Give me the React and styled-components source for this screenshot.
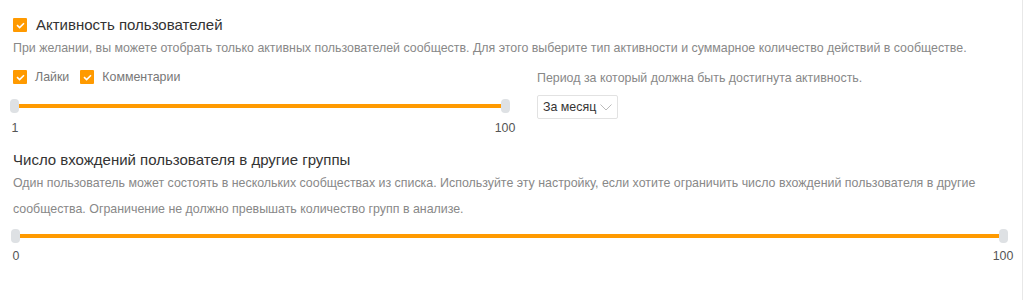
import styled, { createGlobalStyle } from "styled-components";

const GlobalStyle = createGlobalStyle`
body {
  margin: 0;
  background: #fff;
  font-family: "Liberation Sans", Arial, sans-serif;
}
`;

const Page = styled.div`
width: 1023px;
height: 300px;
box-sizing: border-box;
padding: 16px 0 0 13px;
border-right: 1px solid #e8e8e8;
`;

const Header = styled.label`
display: flex;
align-items: center;
gap: 9px;
height: 18px;
`;

const Box = styled.span`
width: 14px;
height: 14px;
background: #ff9a00;
border-radius: 1px;
display: flex;
align-items: center;
justify-content: center;
flex-shrink: 0;
`;

const Title = styled.span`
font-size: 15px;
color: #333;
line-height: ${(p) => (p.small ? "20px" : "18px")};
`;

const Desc = styled.p`
margin: ${(p) => p.margin || "0"};
font-size: 12.4px;
color: #888;
line-height: ${(p) => p.lh || "18px"};
`;

const Columns = styled.div`
display: flex;
margin-top: 11px;
`;

const Left = styled.div`
width: 497px;
`;

const Right = styled.div`
margin-left: 27px;
padding-top: 1px;
`;

const CheckRow = styled.div`
display: flex;
align-items: center;
height: 18px;
`;

const CheckItem = styled.label`
display: flex;
align-items: center;
gap: 8px;
margin-right: 11px;
font-size: 12.4px;
color: #777;
`;

const SliderWrap = styled.div`
width: ${(p) => p.width}px;
margin: ${(p) => p.margin};
`;

const Rail = styled.div`
position: relative;
height: 14px;
`;

const Track = styled.div`
position: absolute;
left: 4px;
right: 4px;
top: 5px;
height: 4px;
background: #ff9a00;
`;

const Thumb = styled.div`
position: absolute;
top: 0;
${(p) => (p.end ? "right: 0;" : "left: 0;")}
width: 9px;
height: 14px;
border-radius: 4px;
background: #dee1e4;
`;

const Labels = styled.div`
display: flex;
justify-content: space-between;
margin: ${(p) => p.gap}px -8px 0;
font-size: 12.4px;
line-height: 16px;
color: #555;
`;

const Num = styled.span`
width: 26px;
text-align: center;
`;

const Select = styled.div`
margin-top: 8px;
width: 81px;
height: 24px;
box-sizing: border-box;
border: 1px solid #e2e2e2;
border-radius: 2px;
display: flex;
align-items: center;
justify-content: space-between;
padding: 0 5px 0 5px;
font-size: 12.4px;
color: #333;
`;

const Check = () => (
  <Box>
    <svg width="9" height="7" viewBox="0 0 9 7">
      <path d="M1 3.2 L3.6 5.6 L8 1.2" fill="none" stroke="#fff" strokeWidth="1.6" />
    </svg>
  </Box>
);

const Slider = ({ width, margin, gap, min, max }) => (
  <SliderWrap width={width} margin={margin}>
    <Rail>
      <Track />
      <Thumb />
      <Thumb end />
    </Rail>
    <Labels gap={gap}>
      <Num>{min}</Num>
      <Num>{max}</Num>
    </Labels>
  </SliderWrap>
);

const App = () => {
  return (
    <Page>
      <GlobalStyle />
      <Header>
        <Check />
        <Title>Активность пользователей</Title>
      </Header>
      <Desc margin="5px 0 0">
        При желании, вы можете отобрать только активных пользователей сообществ. Для этого выберите тип активности и суммарное количество действий в сообществе.
      </Desc>
      <Columns>
        <Left>
          <CheckRow>
            <CheckItem>
              <Check />
              Лайки
            </CheckItem>
            <CheckItem>
              <Check />
              Комментарии
            </CheckItem>
          </CheckRow>
          <Slider width={500} margin="13px 0 0 -3px" gap={7} min="1" max="100" />
        </Left>
        <Right>
          <Desc>Период за который должна быть достигнута активность.</Desc>
          <Select>
            За месяц
            <svg width="12" height="7" viewBox="0 0 12 7">
              <path d="M0.5 0.5 L6 6 L11.5 0.5" fill="none" stroke="#bbb" strokeWidth="1" />
            </svg>
          </Select>
        </Right>
      </Columns>
      <Title small as="div" style={{ marginTop: 14 }}>
        Число вхождений пользователя в другие группы
      </Title>
      <Desc lh="26px">
        Один пользователь может состоять в нескольких сообществах из списка. Используйте эту настройку, если хотите ограничить число вхождений пользователя в другие сообщества. Ограничение не должно превышать количество групп в анализе.
      </Desc>
      <Slider width={997} margin="7px 0 0 -2px" gap={5} min="0" max="100" />
    </Page>
  );
};

export default App;
